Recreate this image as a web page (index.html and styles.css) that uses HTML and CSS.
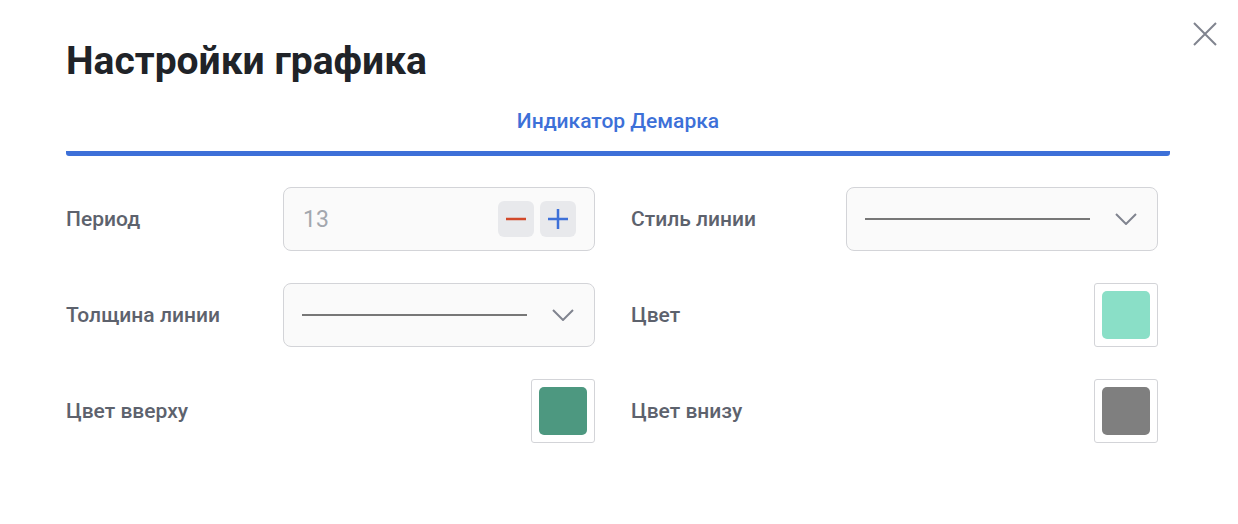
FILE: index.html
```html
<!DOCTYPE html>
<html lang="ru">
<head>
    <meta charset="UTF-8">
    <title>Настройки графика</title>
    <link rel="stylesheet" href="styles.css">
</head>
<body>
    <div class="dialog">
        <!-- Close button -->
        <button class="close-button" aria-label="Закрыть">
            <svg width="24" height="24" viewBox="0 0 24 24">
                <path d="M1 1 L23 23 M23 1 L1 23" stroke="#80848f" stroke-width="2" fill="none"/>
            </svg>
        </button>

        <h1 class="title">Настройки графика</h1>

        <!-- Tabs -->
        <div class="tabs">
            <div class="tab active">Индикатор Демарка</div>
        </div>

        <!-- Settings grid -->
        <div class="settings">
            <div class="field">
                <span class="label">Период</span>
                <div class="stepper">
                    <span class="stepper-value">13</span>
                    <div class="stepper-buttons">
                        <button class="step-button">
                            <svg width="22" height="22" viewBox="0 0 22 22">
                                <path d="M1 11 H21" stroke="#d2492a" stroke-width="2.5"/>
                            </svg>
                        </button>
                        <button class="step-button">
                            <svg width="22" height="22" viewBox="0 0 22 22">
                                <path d="M1 11 H21 M11 1 V21" stroke="#3d70d8" stroke-width="2.5"/>
                            </svg>
                        </button>
                    </div>
                </div>
            </div>

            <div class="field">
                <span class="label">Стиль линии</span>
                <div class="select">
                    <span class="line-preview"></span>
                    <svg class="chevron" width="22" height="12" viewBox="0 0 22 12">
                        <path d="M1 1 L11 11 L21 1" stroke="#80848f" stroke-width="2" fill="none"/>
                    </svg>
                </div>
            </div>

            <div class="field">
                <span class="label">Толщина линии</span>
                <div class="select">
                    <span class="line-preview"></span>
                    <svg class="chevron" width="22" height="12" viewBox="0 0 22 12">
                        <path d="M1 1 L11 11 L21 1" stroke="#80848f" stroke-width="2" fill="none"/>
                    </svg>
                </div>
            </div>

            <div class="field">
                <span class="label">Цвет</span>
                <div class="swatch"><span class="swatch-color color-mint"></span></div>
            </div>

            <div class="field">
                <span class="label">Цвет вверху</span>
                <div class="swatch"><span class="swatch-color color-green"></span></div>
            </div>

            <div class="field">
                <span class="label">Цвет внизу</span>
                <div class="swatch"><span class="swatch-color color-gray"></span></div>
            </div>
        </div>
    </div>
</body>
</html>
```

FILE: styles.css
```css
/* Basic page styling */
body {
    margin: 0;
    font-family: Roboto, "Liberation Sans", sans-serif;
    background: #ffffff;
}

/* Dialog */
.dialog {
    position: relative;
    padding: 38px 68px 0 66px;
}

.close-button {
    position: absolute;
    top: 22px;
    right: 21px;
    width: 24px;
    height: 24px;
    padding: 0;
    border: none;
    background: none;
    cursor: pointer;
}

.close-button svg {
    display: block;
}

/* Header */
.title {
    margin: 0;
    font-size: 39px;
    line-height: 46px;
    font-weight: 700;
    color: #202328;
}

/* Tabs */
.tabs {
    margin-top: 24px;
    border-bottom: 5px solid #3d70d8;
    border-radius: 3px;
}

.tab {
    text-align: center;
    font-size: 21px;
    line-height: 26px;
    font-weight: 500;
    color: #3d70d8;
    padding-bottom: 17px;
}

/* Settings grid */
.settings {
    display: grid;
    grid-template-columns: 529px 527px;
    grid-auto-rows: 64px;
    column-gap: 36px;
    row-gap: 32px;
    margin-top: 31px;
}

.field {
    display: flex;
    align-items: center;
    justify-content: space-between;
}

.label {
    font-size: 21px;
    font-weight: 500;
    color: #5d626d;
}

/* Number stepper */
.stepper {
    box-sizing: border-box;
    width: 312px;
    height: 64px;
    display: flex;
    align-items: center;
    justify-content: space-between;
    padding: 0 18px 0 19px;
    background: #fafafa;
    border: 1px solid #d3d4d8;
    border-radius: 8px;
}

.stepper-value {
    font-size: 23px;
    color: #a3a7ae;
}

.stepper-buttons {
    display: flex;
    gap: 6px;
}

.step-button {
    width: 36px;
    height: 36px;
    padding: 0;
    border: none;
    border-radius: 6px;
    background: #e8e9ec;
    display: flex;
    align-items: center;
    justify-content: center;
    cursor: pointer;
}

/* Select */
.select {
    box-sizing: border-box;
    width: 312px;
    height: 64px;
    display: flex;
    align-items: center;
    gap: 25px;
    padding: 0 20px 0 18px;
    background: #fafafa;
    border: 1px solid #d3d4d8;
    border-radius: 8px;
}

.line-preview {
    flex: 1;
    height: 2px;
    background: #777777;
}

.chevron {
    display: block;
}

/* Colour swatch */
.swatch {
    box-sizing: border-box;
    width: 64px;
    height: 64px;
    padding: 7px;
    border: 1px solid #d3d4d8;
    border-radius: 3px;
    background: #ffffff;
}

.swatch-color {
    display: block;
    width: 100%;
    height: 100%;
    border-radius: 5px;
}

.color-mint {
    background: #8adfc7;
}

.color-green {
    background: #4d9880;
}

.color-gray {
    background: #7f7f7f;
}
```
